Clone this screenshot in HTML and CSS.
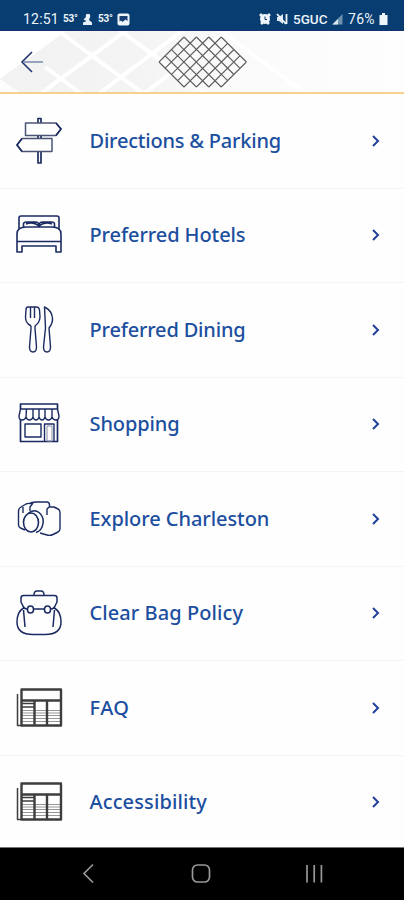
FILE: index.html
```
<!DOCTYPE html>
<html lang="en">
<head>
<meta charset="utf-8">
<title>Visitor guide</title>
<link rel="stylesheet" href="styles.css">
</head>
<body>
<div class="status">
  <span class="time">12:51</span><span class="temp">53°</span>
  <svg class="person" width="11" height="13" viewBox="0 0 11 13"><circle cx="6" cy="3" r="2.300" fill="#e9f2fa"/><path d="M4 4h4l-1 3 3 2.500V12H1V9.500L4.500 8 1.500 6.500z" fill="#e9f2fa"/></svg>
  <span class="temp second">53°</span>
  <svg width="13" height="13" viewBox="0 0 13 13"><rect x=".5" y=".5" width="12" height="12" rx="2" fill="#eef5fb"/><path d="M2.500 3h8v5L8.500 6.500 5.500 9 4 7.500l-1.500 1z" fill="#173f73"/></svg>
  <span class="spacer"></span>
  <svg class="alarm" width="12" height="12" viewBox="0 0 12 12"><path d="M1 3l2-2M11 3L9 1M2 11l2-2M10 11L8 9" stroke="#eef5fb" stroke-width="2.500"/><circle cx="6" cy="6" r="5" fill="#eef5fb"/><path d="M6 3.500V6.500h2" fill="none" stroke="#0a3c70"/></svg>
  <svg class="mute" width="12" height="12" viewBox="0 0 12 12"><path d="M1 4h2l4-3v10L3 8H1z" fill="#dce8f3"/><path d="M1 1l9 10M10.500 1v10" stroke="#eef5fb" stroke-width="1.800"/></svg>
  <span class="net">5GUC</span>
  <svg class="signal" width="11" height="11" viewBox="0 0 11 11"><path d="M10.500 0v10.500H0z" fill="#6f91b0"/><path d="M6 5v5.500H.5z" fill="#dce8f3"/></svg>
  <span class="charge">76%</span>
  <svg class="battery" width="9" height="12" viewBox="0 0 9 12"><path d="M3 0h3v2h2.500v10h-8V2H3z" fill="#eef5fb"/></svg>
</div>
<header class="top">
  <svg width="404" height="61" viewBox="0 31 404 61">
    <defs><linearGradient id="fade" gradientUnits="userSpaceOnUse" x1="0" y1="0" x2="404" y2="0"><stop offset="0" stop-color="#f2f2f2"/><stop offset=".35" stop-color="#f4f4f4"/><stop offset=".55" stop-color="#fafafa"/><stop offset="1" stop-color="#fefefe"/></linearGradient></defs>
    <path d="M66 31L0 79v14h404V31z" fill="url(#fade)"/>
    <path d="M0 79l21 14H0z" fill="#fdfdfd"/>
    <path d="M56 29l89 66M128 29L39 95M45 67l38 28M118 29l90 66M185 29L97 95M230 29l-88 66M218 29l90 66" fill="none" stroke="#fff" stroke-width="4"/>
    <path d="M32 52L22 62l10 10" fill="none" stroke="#20356f" stroke-width="1.600"/>
    <path d="M23 62h20" stroke="#7f8fb0" stroke-width="1.600"/>
    <path d="M159 62l25 25M165.200 55.800L196.400 87M171.500 49.600L208.800 87M177.700 43.400L221.200 87M184 37l43.600 43.700M196.400 37l37.500 37.500M208.800 37l31.300 31.300M221.200 37l25.200 25M159 62l25-25M165.200 68.200L196.400 37M171.500 74.400L208.800 37M177.700 80.600L221.200 37M184 87l43.600-43.700M196.400 87l37.500-37.500M208.800 87l31.300-31.300M221.200 87l25.200-25" fill="none" stroke="#5d5d5d" stroke-width="1.100"/>
  </svg>
</header>
<main class="list">
  <div class="row">
    <svg class="icon" viewBox="0 0 50 50"><path d="M24 7V2.500h3V7M24 19.500v3M27 19.500v3M24 35.500V47h3V35.500" stroke-width="1.700"/><path d="M11.500 7H42l5 6-5 6.500H11.500zM38 22.500H8L3 29l5 6.500h30z" stroke="#4b5477" stroke-width="1.500"/><path d="M42 7l5 6-5 6.500M8 22.500L3 29l5 6.500"/></svg>
    <span class="label l1">Directions &amp; Parking</span><svg class="chev" viewBox="0 0 10 14"><path d="M2 2l5 5-5 5"/></svg>
  </div>
  <div class="row">
    <svg class="icon" viewBox="0 0 50 50"><path d="M5 20V8q0-2 2-2h36q2 0 2 2v12M9.500 18v-4q0-2 3-2h9q3 0 3.500 3 .5-3 3.500-3h9q3 0 3 2v4M12 14q7-3 13 2 6-5 13-2M3 42V24q0-7 9-7h26q9 0 9 7v18h-5v-6H8v6zM3 31.500h44"/></svg>
    <span class="label l2">Preferred Hotels</span><svg class="chev" viewBox="0 0 10 14"><path d="M2 2l5 5-5 5"/></svg>
  </div>
  <div class="row">
    <svg class="icon" viewBox="0 0 50 50"><path d="M14 2q-2 0-2 3l-.5 7q0 6 5 8.500.8 1 .5 3L15.500 42q0 5 3.500 5t3.500-5L21 23.500q-.2-2 .5-3 4-2.500 4.500-8.500L25.500 5q-.500-3-3-3zM16.500 2v11M20.500 2v11M30.500 2q7 3 8 11 .5 5-3.500 10l1.500 19q0 5-3.500 5t-3.500-5l2-19z" stroke-width="1.400"/></svg>
    <span class="label l3">Preferred Dining</span><svg class="chev" viewBox="0 0 10 14"><path d="M2 2l5 5-5 5"/></svg>
  </div>
  <div class="row">
    <svg class="icon" viewBox="0 0 50 50"><path d="M6.500 10V5h37v5M6.500 21v21.500h37V21M6.500 10h37" stroke-width="1.700"/><path d="M6.500 10L5 17q0 4 3 4t4-3q1 3 3.500 3t3.500-3q1 3 3 3t3-3q1 3 3 3t3-3q1 3 3.500 3t3.500-3q1 3 4 3t3-4l-1.500-7M12.500 10L12 18M19 10v8M25 10v8M31 10v8M38 10v8" stroke-width="1.400"/><path d="M11 25h16v13H11zM30.500 42V25H40v17" stroke-width="1.400"/><path d="M33 27h5v15h-5z" stroke="#8790a7" stroke-width="1"/></svg>
    <span class="label l4">Shopping</span><svg class="chev" viewBox="0 0 10 14"><path d="M2 2l5 5-5 5"/></svg>
  </div>
  <div class="row">
    <svg class="icon" viewBox="0 0 50 50"><path d="M11 36l-4.500-2q-2-1-2-3V17q0-2.500 2.500-4l5-3q2-1 4-.5l2-1L22 8h11q2 0 2.500 2.500V13H40l4 2q2 1 2 3.500v16q0 2.500-2 3.500l-5 2.500q-3 1.500-6 .5l-7-2M9 13v6M16 17v-4l3-4M35 13l-2 2v6" stroke-width="1.400"/><ellipse cx="17" cy="28.500" rx="7.500" ry="9.500"/><path d="M14 19.500q6-5 11-1 5 4 4 11-1 7-7 9" stroke-width="1.500"/></svg>
    <span class="label l5">Explore Charleston</span><svg class="chev" viewBox="0 0 10 14"><path d="M2 2l5 5-5 5"/></svg>
  </div>
  <div class="row">
    <svg class="icon" viewBox="0 0 50 50"><path d="M13 21q-3 0-4-3l-2-4V10q0-2.500 2.500-2.500h31q2.500 0 2.500 2.500v4l-2 4q-1 3-4 3M30.500 21h-11M20 7q0-4 3-4h4q3 0 3 4M9.500 20Q3 24 3 34q0 12.500 16 12.500h12q16 0 16-12.500 0-10-6.500-14M9.500 22l1.500 17M40.500 22L39 39" stroke-width="1.500"/><ellipse cx="16.500" cy="21.500" rx="3" ry="3.500"/><ellipse cx="33.500" cy="21.500" rx="3" ry="3.500"/></svg>
    <span class="label l6">Clear Bag Policy</span><svg class="chev" viewBox="0 0 10 14"><path d="M2 2l5 5-5 5"/></svg>
  </div>
  <div class="row">
    <svg class="icon news" viewBox="0 0 50 50"><path class="fine" d="M8 27.500h39M8 30h39M8 32.500h39M8 35.500h39M8 38.500h39"/><path d="M8 20.500h12M8 24h12" stroke-width="1.500"/><path d="M7.500 6.500H47v36H7.500zM7 17.500h40M20.500 17.500V42M33 17.500V42" stroke-width="2.400"/><path d="M3.500 11v31.500h4" stroke-width="1.500"/></svg>
    <span class="label l7">FAQ</span><svg class="chev" viewBox="0 0 10 14"><path d="M2 2l5 5-5 5"/></svg>
  </div>
  <div class="row">
    <svg class="icon news" viewBox="0 0 50 50"><path class="fine" d="M8 27.500h39M8 30h39M8 32.500h39M8 35.500h39M8 38.500h39"/><path d="M8 20.500h12M8 24h12" stroke-width="1.500"/><path d="M7.500 6.500H47v36H7.500zM7 17.500h40M20.500 17.500V42M33 17.500V42" stroke-width="2.400"/><path d="M3.500 11v31.500h4" stroke-width="1.500"/></svg>
    <span class="label l8">Accessibility</span><svg class="chev" viewBox="0 0 10 14"><path d="M2 2l5 5-5 5"/></svg>
  </div>
</main>
<nav class="nav">
  <svg width="404" height="52" viewBox="0 848 404 52" fill="none" stroke="#989898" stroke-width="1.700"><path d="M93 864.500l-9 9 9 9"/><rect x="192.500" y="865" width="17" height="17" rx="5"/><path d="M307 865v17.500M314.200 865v17.500M321.400 865v17.500"/></svg>
</nav>
</body>
</html>
```
FILE: styles.css
```
* { box-sizing: border-box; }
body { margin: 0; width: 404px; height: 900px; overflow: hidden; background: #fefefe; font-family: "Noto Sans", sans-serif; display: flex; flex-direction: column; }
svg { display: block; flex: none; }
.status { flex: none; height: 31px; padding: 8px 16px 0 23px; background: #073d70; border-bottom: 1px solid #173071; color: #edf4fb; display: flex; align-items: center; font: 400 14px/22px Roboto, sans-serif; white-space: nowrap; }
.time { width: 36px; margin-right: 4px; letter-spacing: .2px; }
.temp { width: 15px; font-size: 10px; font-weight: 700; letter-spacing: -.2px; margin-right: 4px; }
.person { margin-right: 5px; }
.temp.second { margin-right: 4px; }
.spacer { flex: 1; }
.alarm { margin-right: 5px; }
.mute { margin-right: 5px; }
.net { width: 35px; font-size: 13.500px; font-weight: 500; margin-right: 4px; }
.signal { margin-right: 5px; }
.charge { width: 29px; font-size: 14px; letter-spacing: .3px; margin-right: 2px; }
.top { flex: none; height: 63px; background: #fff; border-bottom: 2px solid #f6cf91; }
.list { flex: none; height: 753px; display: grid; grid-template-rows: repeat(8, 94.500px); }
.row { display: flex; align-items: center; padding: 0 23px 0 14px; border-bottom: 1px solid #f4f4f4; }
.icon { width: 50px; height: 50px; fill: none; stroke: #1b2b61; stroke-width: 1.600; stroke-linejoin: round; }
.news { stroke: #3d3d3d; }
.fine { stroke: #969696; stroke-width: 1; }
.label { flex: 1; margin-left: 25.500px; color: #1c4f9f; font-weight: 500; font-size: 20px; line-height: 28px; white-space: nowrap; }
.l1 { letter-spacing: -.21px; }
.l2 { letter-spacing: -.09px; }
.l3 { letter-spacing: -.18px; }
.l4 { letter-spacing: -.12px; }
.l5 { letter-spacing: -.06px; }
.l6 { letter-spacing: .07px; }
.l7 { letter-spacing: .5px; }
.l8 { letter-spacing: .12px; }
.chev { width: 10px; height: 14px; fill: none; stroke: #20409a; stroke-width: 2; }
.nav { flex: none; height: 53px; background: #000; border-top: 1px solid #777; position: relative; }
```
